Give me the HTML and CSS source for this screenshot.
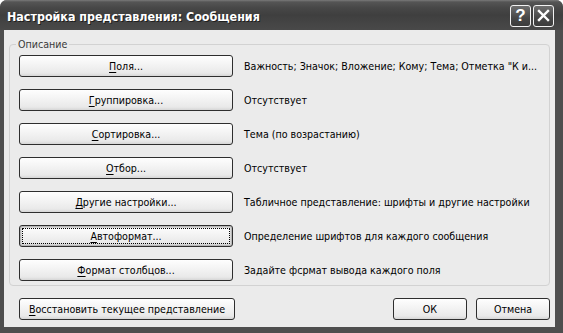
FILE: index.html
```html
<!DOCTYPE html>
<html>
<head>
    <title>Настройка представления: Сообщения</title>
    <link rel="stylesheet" href="styles.css">
</head>
<body>
    <div class="window">
        <div class="titlebar">
            <span class="title">Настройка представления: Сообщения</span>
            <div class="caption-buttons">
                <span class="cap-btn help">?</span>
                <span class="cap-btn close">
                    <svg width="13" height="13" viewBox="0 0 13 13">
                        <path d="M2 2 L11 11 M11 2 L2 11" stroke="#fff" stroke-width="2.4" stroke-linecap="square"/>
                    </svg>
                </span>
            </div>
        </div>

        <div class="client">
            <fieldset class="group">
                <legend>Описание</legend>
                <div class="row">
                    <button class="btn wide"><u>П</u>оля...</button>
                    <span class="desc">Важность; Значок; Вложение; Кому; Тема; Отметка "К и...</span>
                </div>
                <div class="row">
                    <button class="btn wide"><u>Г</u>руппировка...</button>
                    <span class="desc">Отсутствует</span>
                </div>
                <div class="row">
                    <button class="btn wide"><u>С</u>ортировка...</button>
                    <span class="desc">Тема (по возрастанию)</span>
                </div>
                <div class="row">
                    <button class="btn wide"><u>О</u>тбор...</button>
                    <span class="desc">Отсутствует</span>
                </div>
                <div class="row">
                    <button class="btn wide"><u>Д</u>ругие настройки...</button>
                    <span class="desc">Табличное представление: шрифты и другие настройки</span>
                </div>
                <div class="row">
                    <button class="btn wide focused"><u>А</u>втоформат...</button>
                    <span class="desc">Определение шрифтов для каждого сообщения</span>
                </div>
                <div class="row">
                    <button class="btn wide"><u>Ф</u>ормат столбцов...</button>
                    <span class="desc">Задайте фсрмат вывода каждого поля</span>
                </div>
            </fieldset>

            <div class="footer">
                <button class="btn restore"><u>В</u>осстановить текущее представление</button>
                <button class="btn small ok">ОК</button>
                <button class="btn small">Отмена</button>
            </div>
        </div>
    </div>
</body>
</html>
```

FILE: styles.css
```css
* {
    box-sizing: border-box;
}
body {
    margin: 0;
    background: #fff;
    font-family: "DejaVu Sans Condensed", "DejaVu Sans", sans-serif;
    font-size: 10.6px;
}
.window {
    width: 563px;
    height: 333px;
    display: flex;
    flex-direction: column;
    background: #4e4e4e;
    border-radius: 7px 7px 0 0;
    padding-bottom: 6px;
}
.titlebar {
    height: 30px;
    display: flex;
    align-items: center;
    justify-content: space-between;
    padding: 0 9px 0 7px;
    border-radius: 7px 7px 0 0;
    background: linear-gradient(#7a7a7a 0, #555 2px, #474747 8px, #3f3f3f 50%, #494949 100%);
}
.title {
    color: #fff;
    font-weight: bold;
    font-size: 12.4px;
    text-shadow: 1px 1px #1e1e1e;
    margin-top: 2px;
}
.caption-buttons {
    display: flex;
    gap: 2px;
    margin-top: 1px;
}
.cap-btn {
    width: 21px;
    height: 22px;
    border: 1px solid #f2f2f2;
    border-radius: 3px;
    background: linear-gradient(#6e6e6e, #474747 60%, #3c3c3c);
    display: flex;
    align-items: center;
    justify-content: center;
    color: #fff;
}
.help {
    font-family: "Liberation Sans", sans-serif;
    font-weight: bold;
    font-size: 17px;
}
.client {
    flex: 1;
    margin: 0 8px 0 4px;
    background: #ebebeb;
    padding: 8px 5px 0 5px;
    display: flex;
    flex-direction: column;
}
.group {
    margin: 0;
    min-width: 0;
    border: 1px solid #d2d2d2;
    border-radius: 4px;
    padding: 5px 0 4px 9px;
    display: flex;
    flex-direction: column;
    gap: 12px;
}
.group legend {
    color: #3a3a3a;
    padding: 0 2px;
    margin-left: -3px;
}
.row {
    display: flex;
    align-items: center;
    gap: 11px;
}
.btn {
    height: 22px;
    border: 1px solid #2e2e2e;
    border-radius: 3px;
    background: linear-gradient(#fefefe, #f3f3f3 45%, #e9e9e9 85%, #d6d6d6);
    font-family: inherit;
    font-size: 10.6px;
    color: #000;
    padding: 0;
}
.btn u {
    text-decoration-thickness: 1px;
    text-underline-offset: 2px;
}
.wide {
    width: 214px;
}
.focused {
    box-shadow: inset 0 0 0 1px #b8b8b8, inset 0 0 0 2px #d8d8d8;
    outline: 1px dotted #000;
    outline-offset: -4px;
}
.desc {
    color: #000;
    white-space: nowrap;
}
.footer {
    display: flex;
    align-items: center;
    margin-top: 12px;
    padding-left: 10px;
}
.restore {
    width: 216px;
}
.small {
    width: 74px;
    margin-left: 9px;
}
.ok {
    margin-left: auto;
}
```
